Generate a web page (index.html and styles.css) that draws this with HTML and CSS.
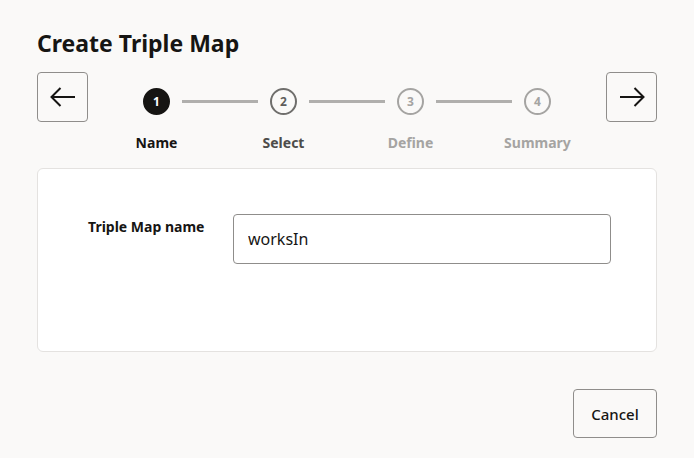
FILE: index.html
```html
<!DOCTYPE html>
<html lang="en">
<head>
<meta charset="utf-8">
<title>Create Triple Map</title>
<link rel="stylesheet" href="styles.css">
</head>
<body>
<div class="dialog">
  <h1 class="title">Create Triple Map</h1>
  <div class="wizard-head">
    <button class="nav-btn" aria-label="Previous">
      <svg width="26" height="26" viewBox="0 0 26 26"><path d="M25 13H1.5M10.5 4L1.5 13l9 9" fill="none" stroke="#161513" stroke-width="2"/></svg>
    </button>
    <div class="stepper">
      <div class="step done first">
        <div class="track"><span class="line"></span><span class="circle">1</span><span class="line"></span></div>
        <div class="label">Name</div>
      </div>
      <div class="step next">
        <div class="track"><span class="line"></span><span class="circle">2</span><span class="line"></span></div>
        <div class="label">Select</div>
      </div>
      <div class="step off">
        <div class="track"><span class="line"></span><span class="circle">3</span><span class="line"></span></div>
        <div class="label">Define</div>
      </div>
      <div class="step off last">
        <div class="track"><span class="line"></span><span class="circle">4</span><span class="line"></span></div>
        <div class="label">Summary</div>
      </div>
    </div>
    <button class="nav-btn" aria-label="Next">
      <svg width="26" height="26" viewBox="0 0 26 26"><path d="M1 13h23.5M15.5 4l9 9-9 9" fill="none" stroke="#161513" stroke-width="2"/></svg>
    </button>
  </div>
  <div class="card">
    <div class="form-row">
      <label class="field-label" for="tm">Triple Map name</label>
      <input id="tm" class="field-input" type="text" value="worksIn">
    </div>
  </div>
  <div class="footer">
    <button class="cancel-btn">Cancel</button>
  </div>
</div>
</body>
</html>
```

FILE: styles.css
```css
* { box-sizing: border-box; }
html, body {
  margin: 0;
  background: #faf9f8;
  font-family: "Noto Sans", "Open Sans", sans-serif;
  color: #161513;
}
.dialog {
  padding: 27px 37px 0 37px;
}
.title {
  margin: 0;
  font-size: 23px;
  line-height: 32px;
  font-weight: 700;
}
.wizard-head {
  display: flex;
  align-items: flex-start;
  margin-top: 13px;
}
.nav-btn {
  width: 51px;
  height: 50px;
  border: 1px solid #8f8d8b;
  border-radius: 4px;
  background: transparent;
  display: flex;
  align-items: center;
  justify-content: center;
  padding: 0;
}
.stepper {
  flex: 1;
  display: flex;
  justify-content: center;
  padding-top: 16px;
}
.step {
  width: 127px;
  display: flex;
  flex-direction: column;
  align-items: center;
}
.track {
  width: 100%;
  display: flex;
  align-items: center;
  height: 27px;
}
.line {
  flex: 1;
  height: 3px;
  background: #b0afad;
}
.line:first-child { margin-right: 12px; }
.line:last-child { margin-left: 12px; }
.first .line:first-child, .last .line:last-child { background: transparent; }
.circle {
  width: 27px;
  height: 27px;
  border-radius: 50%;
  display: flex;
  align-items: center;
  justify-content: center;
  font-size: 12px;
  font-weight: 700;
  border: 2px solid #a5a4a2;
  color: #a5a4a2;
}
.done .circle {
  background: #161513;
  border-color: #161513;
  color: #fff;
}
.next .circle {
  border-color: #6f6e6c;
  color: #5e5d5b;
}
.label {
  margin-top: 18px;
  font-size: 14px;
  font-weight: 700;
  line-height: 20px;
  color: #a5a4a2;
}
.done .label { color: #161513; }
.next .label { color: #4d4c4a; }
.card {
  margin-top: 15px;
  height: 184px;
  background: #fff;
  border: 1px solid #e4e2e0;
  border-radius: 6px;
  padding: 45px 45px 0 50px;
}
.form-row {
  display: flex;
  align-items: flex-start;
}
.field-label {
  width: 145px;
  font-size: 14px;
  font-weight: 700;
  line-height: 20px;
  padding-top: 3px;
}
.field-input {
  width: 378px;
  height: 50px;
  border: 1px solid #8f8d8b;
  border-radius: 4px;
  padding: 0 14px;
  font-family: inherit;
  font-size: 16px;
  color: #161513;
  background: #fff;
}
.footer {
  display: flex;
  justify-content: flex-end;
  margin-top: 37px;
}
.cancel-btn {
  width: 84px;
  height: 49px;
  border: 1px solid #8f8d8b;
  border-radius: 4px;
  background: transparent;
  font-family: inherit;
  font-size: 15px;
  font-weight: 500;
  color: #161513;
}
```
